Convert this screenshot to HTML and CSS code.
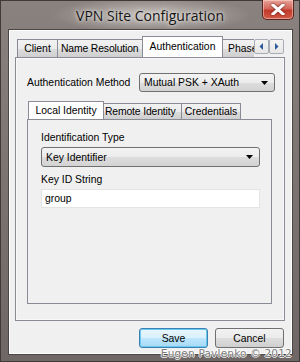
FILE: index.html
```html
<!DOCTYPE html>
<html>
<head>
<meta charset="utf-8">
<link rel="stylesheet" href="styles.css">
</head>
<body>
<div class="window">
  <div class="titlebar">
    <span class="title">VPN Site Configuration</span>
    <div class="close"><svg width="14" height="11" viewBox="0 0 14 11"><path d="M2 1 L12 10 M12 1 L2 10" stroke="#ffffff" stroke-width="3" stroke-linecap="square"/></svg></div>
  </div>
  <div class="client">
    <div class="tabs outer">
      <div class="strip">
        <div class="tablist">
          <div class="tab">Client</div>
          <div class="tab">Name Resolution</div>
          <div class="tab sel">Authentication</div>
          <div class="tab">Phase 1</div>
        </div>
        <div class="spin">
          <div class="sbtn"><svg width="5" height="7" viewBox="0 0 5 7"><path d="M4 0 L4 7 L0.5 3.5 Z" fill="#2a5a9a"/></svg></div>
          <div class="sbtn"><svg width="5" height="7" viewBox="0 0 5 7"><path d="M1 0 L1 7 L4.5 3.5 Z" fill="#2a5a9a"/></svg></div>
        </div>
      </div>
      <div class="panel outerpanel">
        <div class="row">
          <span class="label">Authentication Method</span>
          <div class="combo method"><span>Mutual PSK + XAuth</span><svg class="arrow" width="7" height="4" viewBox="0 0 7 4"><path d="M0 0 H7 L3.5 4 Z" fill="#000"/></svg></div>
        </div>
        <div class="tabs inner">
          <div class="strip">
            <div class="tablist">
              <div class="tab sel">Local Identity</div>
              <div class="tab">Remote Identity</div>
              <div class="tab">Credentials</div>
            </div>
          </div>
          <div class="panel innerpanel">
            <div class="field">
              <span class="label">Identification Type</span>
              <div class="combo wide"><span>Key Identifier</span><svg class="arrow" width="7" height="4" viewBox="0 0 7 4"><path d="M0 0 H7 L3.5 4 Z" fill="#000"/></svg></div>
            </div>
            <div class="field">
              <span class="label">Key ID String</span>
              <div class="input">group</div>
            </div>
          </div>
        </div>
      </div>
    </div>
    <div class="buttons">
      <div class="btn default">Save</div>
      <div class="btn">Cancel</div>
    </div>
  </div>
  <div class="watermark">Eugen Pavlenko © 2012</div>
</div>
</body>
</html>
```
FILE: styles.css
```css
* { box-sizing: border-box; }
html, body { margin: 0; padding: 0; }
body { width: 300px; height: 362px; overflow: hidden; background: #6f6866; }

.window {
  position: relative;
  width: 300px;
  height: 362px;
  display: flex;
  flex-direction: column;
  border: 1px solid #3e3a39;
  background: linear-gradient(180deg, #8a827f 0%, #7d7673 40%, #6e6765 100%);
  font-family: "Liberation Sans", Arial, sans-serif;
  font-size: 10.4px;
  color: #000;
}

.titlebar {
  position: relative;
  height: 28px;
  flex: none;
  display: flex;
  align-items: center;
  justify-content: center;
  background: radial-gradient(ellipse 100px 18px at 150px 14px, rgba(225,220,217,0.7), rgba(200,195,192,0.35) 60%, rgba(0,0,0,0) 100%);
}
.title {
  font-family: "Open Sans", "Noto Sans", sans-serif;
  font-size: 14px;
  color: #141414;
  text-shadow: 0 0 6px #e6e2df, 0 0 3px #e6e2df;
}
.close {
  position: absolute;
  right: 5px;
  top: -1px;
  width: 32px;
  height: 20px;
  border: 1px solid #5a2420;
  border-top: none;
  border-radius: 0 0 5px 5px;
  background: linear-gradient(180deg, #e8a39a 0%, #d4665a 45%, #c23a2b 55%, #d25c48 100%);
  box-shadow: inset 0 0 0 1px rgba(255,220,210,0.5);
  display: flex;
  align-items: center;
  justify-content: center;
}
.close svg { filter: drop-shadow(0 0 1px #5a1a10); }

.client {
  flex: 1;
  margin: 0 6px 0 7px;
  background: #f0f0f0;
  border: 1px solid #4c4745;
  box-shadow: inset 0 0 0 1px #ffffff;
  padding: 6px 8px 0 6px;
  display: flex;
  flex-direction: column;
}
.window::after { content: ""; display: block; height: 6px; flex: none; }

.tabs { display: flex; flex-direction: column; }
.strip { display: flex; align-items: flex-end; height: 21px; position: relative; z-index: 1; }
.tablist { display: flex; align-items: flex-end; overflow: hidden; }
.outer .tablist { width: 240px; padding-left: 2px; }
.tab {
  height: 18px;
  padding: 0 3px;
  border: 1px solid #898c95;
  border-bottom: none;
  margin-right: -1px;
  background: linear-gradient(180deg, #f2f2f2 0%, #ebebeb 50%, #dddddd 51%, #cfcfcf 100%);
  display: flex;
  align-items: center;
  justify-content: center;
  white-space: nowrap;
  flex: none;
}
.tab.sel {
  height: 22px;
  margin-bottom: -1px;
  margin-left: -2px;
  margin-right: -2px;
  padding: 0 4px 2px;
  background: #ffffff;
  position: relative;
  z-index: 2;
}
.outer .tab:nth-child(1) { width: 41px; }
.outer .tab:nth-child(2) { width: 88px; padding: 0 0 0 3px; justify-content: flex-start; letter-spacing: -0.15px; }
.outer .tab.sel { width: 81px; }
.outer .tab:nth-child(4) { padding-left: 6px; justify-content: flex-start; }

.spin { display: flex; align-self: flex-end; margin-bottom: 3px; }
.sbtn {
  width: 15px; height: 15px;
  border: 1px solid #a8acb4;
  border-radius: 2px;
  background: linear-gradient(180deg, #f4f4f4 0%, #e6e6e6 100%);
  display: flex; align-items: center; justify-content: center;
}

.panel {
  border: 1px solid #898c95;
  background: #f0f0f0;
}
.outerpanel {
  width: 270px;
  height: 264px;
  padding: 15px 10px 0 11px;
  box-shadow: inset 0 0 0 1px #f8f8f8;
}
.row { display: flex; align-items: center; justify-content: space-between; height: 19px; }
.label { white-space: nowrap; }

.combo {
  height: 20px;
  border: 1px solid #707070;
  border-radius: 3px;
  background: linear-gradient(180deg, #f3f3f3 0%, #ececec 50%, #dddddd 51%, #d3d3d3 100%);
  display: flex;
  align-items: center;
  justify-content: space-between;
  padding: 0 6px 0 4px;
}
.method { width: 136px; height: 19px; margin-right: -1px; }

.inner { margin-top: 9px; }
.inner .strip { height: 18px; }
.inner .tab { height: 16px; }
.inner .tab.sel { height: 19px; margin-left: -1px; padding: 0 4px 2px; width: 76px; }
.inner .tab:nth-child(2) { width: 81px; margin-left: -1px; }
.inner .tab:nth-child(3) { width: 60px; }

.innerpanel {
  width: 245px;
  height: 185px;
  padding: 11px 10px 0 13px;
  background: #f0f0f0;
}
.field { display: flex; flex-direction: column; gap: 3px; margin-bottom: 6px; }
.field .label { line-height: 13px; }
.wide { width: 219px; height: 20px; }
.input {
  width: 219px;
  height: 19px;
  background: #ffffff;
  border: 1px solid #e3e3e3;
  padding: 0 3px;
  display: flex;
  align-items: center;
}

.buttons {
  display: flex;
  justify-content: flex-end;
  gap: 7px;
  margin-top: 7px;
}
.btn {
  width: 69px;
  height: 20px;
  border: 1px solid #707070;
  border-radius: 3px;
  background: linear-gradient(180deg, #f2f2f2 0%, #ebebeb 50%, #dddddd 51%, #cfcfcf 100%);
  display: flex;
  align-items: center;
  justify-content: center;
}
.btn.default {
  border-color: #3c7fb1;
  box-shadow: inset 0 0 0 1px #68c9f1;
  background: linear-gradient(180deg, #eaf6fd 0%, #d9f0fc 50%, #bee6fd 51%, #a7d9f5 100%);
}

.watermark {
  position: absolute;
  right: 7px;
  bottom: 2px;
  font-family: "DejaVu Sans", sans-serif;
  font-size: 10.5px;
  letter-spacing: 0.2px;
  color: #7c7c7c;
  text-shadow: -1px 0 rgba(255,255,255,0.8), 1px 0 rgba(255,255,255,0.8), 0 -1px rgba(255,255,255,0.8), 0 1px rgba(255,255,255,0.8);
}
```
